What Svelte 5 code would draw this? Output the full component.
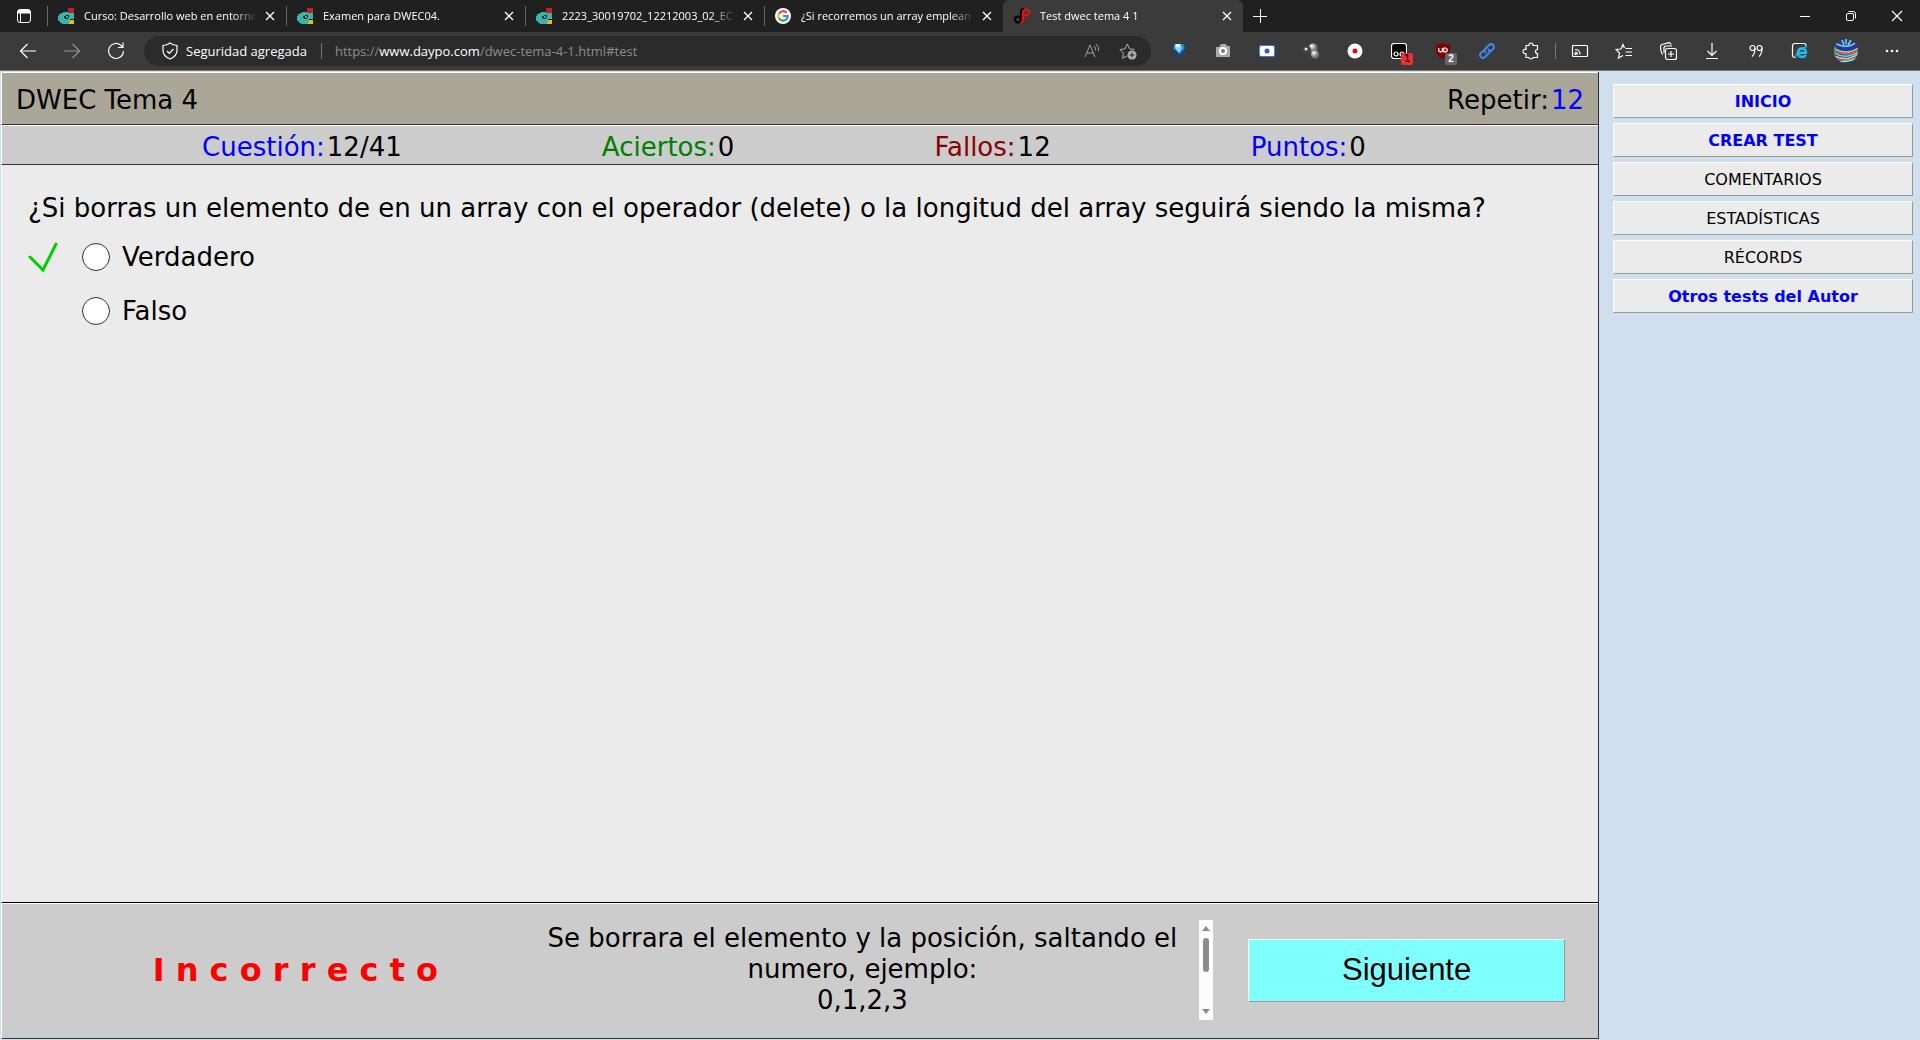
<script>
  const tabs = [
    { title: 'Curso: Desarrollo web en entorno', icon: 'campus' },
    { title: 'Examen para DWEC04.', icon: 'campus' },
    { title: '2223_30019702_12212003_02_EC', icon: 'campus' },
    { title: '¿Si recorremos un array emplean', icon: 'google' },
    { title: 'Test dwec tema 4 1', icon: 'daypo', active: true }
  ];
  const stats = [
    { label: 'Cuestión:', value: '12/41', tone: 'blue' },
    { label: 'Aciertos:', value: '0', tone: 'green' },
    { label: 'Fallos:', value: '12', tone: 'maroon' },
    { label: 'Puntos:', value: '0', tone: 'blue' }
  ];
  const options = [
    { text: 'Verdadero', correct: true },
    { text: 'Falso', correct: false }
  ];
  const links = [
    { text: 'INICIO', strong: true },
    { text: 'CREAR TEST', strong: true },
    { text: 'COMENTARIOS' },
    { text: 'ESTADÍSTICAS' },
    { text: 'RÉCORDS' },
    { text: 'Otros tests del Autor', strong: true }
  ];
  let answer = $state('');
</script>

<div class="window">
  <header class="tabstrip">
    <button class="tabmenu" aria-label="Menú de pestañas">
      <svg width="16" height="16" viewBox="0 0 16 16" fill="none" stroke="#fff"><rect x="1.5" y="1.5" width="13" height="13" rx="2.5" /><path d="M2 3h12M2 4.5h12" stroke-width="2" /><path d="M4.5 5v9" /></svg>
    </button>
    {#each tabs as tab}
      <div class="tab" class:active={tab.active}>
        {#if tab.icon === 'campus'}
          <svg class="fav" viewBox="0 0 16 16"><path d="M10 0h6v6h-6z" fill="#c4201d" /><path d="M11 12h5v4h-5z" fill="#f3b715" /><path d="M5 4h5v1h6v6h-4v3h-1v2H4v-1H2v-2H0V8h1V6h2V5h2z" fill="#35b5ad" /><path d="M6 8h2V7h3v3h-1v1H7v-1H6z" fill="#202020" /><path d="M8 8h2v2H8z" fill="#35b5ad" /></svg>
        {:else if tab.icon === 'google'}
          <svg class="fav" viewBox="0 0 16 16"><circle cx="8" cy="8" r="8" fill="#fff" /><g fill="none" stroke-width="2.2"><path d="M11.5 4.6A4.8 4.8 0 0 0 3.9 5.7" stroke="#ea4335" /><path d="M3.9 5.7a4.8 4.8 0 0 0 0 4.6" stroke="#fbbc05" /><path d="M3.9 10.3a4.8 4.8 0 0 0 7.1 1.4" stroke="#34a853" /><path d="M11 11.7A4.6 4.6 0 0 0 12.7 8H8" stroke="#4285f4" /></g></svg>
        {:else}
          <svg class="fav" viewBox="0 0 16 16" fill="none" stroke-width="2"><circle cx="4" cy="11.5" r="3" stroke="#000" /><path d="M7 12V4q0-3 3-3" stroke="#000" /><path d="M6 15q3 0 3-4V4.500" stroke="#f00b0b" /><circle cx="12" cy="4.500" r="3" stroke="#f00b0b" /></svg>
        {/if}
        <span class="title">{tab.title}</span>
        <button class="close" aria-label="Cerrar pestaña"><svg width="10" height="10" viewBox="0 0 10 10" stroke="#fff" stroke-width="1.300"><path d="M1 1l8 8M9 1L1 9" /></svg></button>
      </div>
    {/each}
    <button class="newtab" aria-label="Nueva pestaña"><svg width="14" height="14" viewBox="0 0 14 14" stroke="#fff"><path d="M7.500 0v14M0 7.500h14" /></svg></button>
    <div class="controls">
      <button aria-label="Minimizar"><svg width="10" height="10" viewBox="0 0 10 10" stroke="#fff"><path d="M0 5.500h10" /></svg></button>
      <button aria-label="Restaurar"><svg width="10" height="10" viewBox="0 0 10 10" stroke="#fff" fill="none"><rect x=".5" y="2.500" width="7" height="7" rx="1.500" /><path d="M2.500 .5H7q2.500 0 2.500 2.500v4.500" /></svg></button>
      <button aria-label="Cerrar"><svg width="12" height="12" viewBox="0 0 12 12" stroke="#fff" stroke-width="1.200"><path d="M1 1l10 10M11 1L1 11" /></svg></button>
    </div>
  </header>

  <nav class="toolbar" aria-label="Navegador">
    <button class="tool" aria-label="Atrás"><svg width="18" height="18" viewBox="0 0 18 18"><path d="M17 9H1.500M8.500 2l-7 7 7 7" /></svg></button>
    <button class="tool dim" aria-label="Adelante"><svg width="18" height="18" viewBox="0 0 18 18"><path d="M1 9h15.500M9.500 2l7 7-7 7" /></svg></button>
    <button class="tool" aria-label="Actualizar"><svg width="18" height="18" viewBox="0 0 18 18"><path d="M16.500 9A7.500 7.500 0 1 1 13.500 3L16 5.500M16 .5v5h-5" /></svg></button>
    <div class="address">
      <svg width="16" height="18" viewBox="0 0 16 18" fill="none" stroke="#fff" stroke-width="1.200"><path d="M8 1Q11 3.300 15 3.500V8.500Q15 14 8 17 1 14 1 8.500V3.500Q5 3.300 8 1z" /><path d="M5 9l2.300 2.300L11.500 7" /></svg>
      <span class="secure">Seguridad agregada</span>
      <i class="bar"></i>
      <a class="url" href="#test">https://<b>www.daypo.com</b>/dwec-tema-4-1.html#test</a>
      <button class="mini" aria-label="Leer en voz alta"><svg width="16" height="16" viewBox="0 0 16 16" fill="none" stroke="#a0a0a0"><path d="M1 14L6 2l5 12M2.700 10h6.600M10 3q2 2 1.500 4.500M12 1q3.500 3 2.500 7" /></svg></button>
      <button class="mini" aria-label="Agregar a favoritos"><svg width="18" height="18" viewBox="0 0 18 18" fill="none" stroke="#b0b0b0"><path d="M8 14l-4.500 2.300 1-5L1 7.500l5-.700L8.300 2l2.300 4.800 5 .700" /><circle cx="13" cy="13" r="4.500" fill="#b0b0b0" stroke="none" /><path d="M10.500 13h5M13 10.500v5" stroke="#222" /></svg></button>
    </div>
    <button class="tool" aria-label="Extensión diamante"><svg width="16" height="16" viewBox="0 0 16 16" class="flat"><path d="M3 1h10l2 4-5 6-1 5H8L6 11 1 5z" fill="#084b83" /><path d="M4 1h8l2 4-5 6-7-6z" fill="#1d8fe0" /><path d="M4 1h5l2 4-3 5-4-5z" fill="#8cd5fb" /><path d="M5 1h4v3H5z" fill="#fff" /></svg></button>
    <button class="tool" aria-label="Captura"><svg width="16" height="16" viewBox="0 0 16 16" class="flat"><path d="M1 4h3l2-3h5l1 2h3v11H1z" fill="#a9a9a9" /><circle cx="8" cy="8" r="4" fill="#fff" /><circle cx="8" cy="8" r="2" fill="#777" /></svg></button>
    <button class="tool" aria-label="Grabador de pantalla"><svg width="16" height="16" viewBox="0 0 16 16"><rect x="0" y="2" width="16" height="12" rx="2" fill="#2a7de1" stroke="none" /><rect x="1.500" y="3.500" width="13" height="9" rx="1" fill="#fff" /><circle cx="8" cy="8" r="2.500" fill="#4651cb" stroke="none" /></svg></button>
    <button class="tool" aria-label="Moléculas"><svg width="16" height="16" viewBox="0 0 16 16" class="flat"><defs><radialGradient id="ball" cx=".35" cy=".3"><stop stop-color="#fff" /><stop offset="1" stop-color="#777" /></radialGradient></defs><circle cx="10" cy="5" r="4.500" fill="url(#ball)" /><circle cx="12" cy="11.500" r="4" fill="url(#ball)" /><circle cx="4" cy="7" r="4" fill="#444" /><circle cx="3" cy="6" r="1.500" fill="#eee" /></svg></button>
    <button class="tool" aria-label="Grabar"><svg width="16" height="16" viewBox="0 0 16 16" class="flat"><circle cx="8" cy="8" r="7.500" fill="#fff" /><circle cx="8" cy="8" r="2.500" fill="#e50a0a" /></svg></button>
    <button class="tool badged" aria-label="Tampermonkey, 1"><svg width="16" height="16" viewBox="0 0 16 16"><rect x=".5" y=".5" width="15" height="15" rx="2.500" fill="#000" /><circle cx="5" cy="11" r="2" /><circle cx="11" cy="11" r="2" /></svg><span class="badge red">1</span></button>
    <button class="tool badged" aria-label="Bloqueador, 2"><svg width="16" height="16" viewBox="0 0 16 16"><path d="M8 0q3 2 7 2v6q0 5-7 8-7-3-7-8V2q4 0 7-2z" fill="#800000" stroke="none" /><path d="M3.800 5v2.500q0 1.300 1.300 1.300h1q1.300 0 1.300-1.300V5M8.800 5v3.800h1.500q1.900 0 1.900-1.900T10.300 5z" /></svg><span class="badge gray">2</span></button>
    <button class="tool" aria-label="Enlaces"><svg class="link" width="18" height="18" viewBox="0 0 18 18"><path d="M7.500 10.500q-2-2 0-4L11 3q2-1.800 4 0t0 4l-2.500 2.500M10.500 7.500q2 2 0 4L7 15q-2 1.800-4 0t0-4l2.500-2.500" /></svg></button>
    <button class="tool" aria-label="Extensiones"><svg width="18" height="18" viewBox="0 0 18 18"><path d="M4 3.500h3Q7 1 9 1t2 2.500h4.500v4Q13.500 7.500 13.500 9.500t2 2v4H11Q11 17 9 17t-2-1.500H4v-4Q1 12 1 9.500t3-2z" stroke-linejoin="round" /></svg></button>
    <i class="bar edge"></i>
    <button class="tool" aria-label="Transmitir"><svg width="18" height="14" viewBox="0 0 18 14"><rect x="1.500" y="1.500" width="15" height="11" rx="1" /><path d="M4 5.500q5 0 5 5M4 8q2.500 0 2.500 2.500" /><circle cx="4.500" cy="10" r=".7" /></svg></button>
    <button class="tool" aria-label="Favoritos"><svg width="18" height="18" viewBox="0 0 18 18"><path d="M9.500 6L8 2.500 6 7 1 7.500 4.500 11l-1 5L8 13.500M10.500 6.500H17M10.500 10H17M10.500 13.500H17" /></svg></button>
    <button class="tool" aria-label="Colecciones"><svg width="18" height="18" viewBox="0 0 18 18"><path d="M4 12.500Q2 12 1.500 5 1.300 3 3 2.500l7-1.800q1.800 0 2 2M5 11V6q0-2 2-2h6" /><rect x="6.500" y="6.500" width="11" height="11" rx="2" /><path d="M12 9v6M9 12h6" /></svg></button>
    <button class="tool" aria-label="Descargas"><svg width="14" height="18" viewBox="0 0 14 18"><path d="M7 1v12M2.500 9L7 13.500 11.500 9M1 16.500h12" /></svg></button>
    <button class="tool" aria-label="Citar"><svg width="14" height="14" viewBox="0 0 14 14"><circle cx="3.500" cy="4" r="2.500" /><path d="M6 4q0 6-3 8.500" /><circle cx="10.500" cy="4" r="2.500" /><path d="M13 4q0 6-3 8.500" /></svg></button>
    <button class="tool" aria-label="Modo Internet Explorer"><svg width="18" height="18" viewBox="0 0 18 18"><path d="M4 15.500Q1.500 15.500 1.500 13V4Q1.500 1.500 4 1.500h9.500Q15 1.500 15 4" /><path d="M15 13Q13.500 15 11 15q-4-.2-4-4.500T11 6.500q4 .2 4 4.200H7.500" stroke="#1ebbee" stroke-width="2.500" /><path d="M5 16q-1-4 4-8t7-3" stroke="#1ebbee" /></svg></button>
    <button class="tool avatar" aria-label="Perfil"><svg width="24" height="24" viewBox="0 0 24 24"><defs><clipPath id="face"><circle cx="12" cy="12" r="12" /></clipPath></defs><g clip-path="url(#face)" stroke-width="1.500"><path d="M0 0h24v24H0z" fill="#23408f" stroke="none" /><path d="M0 3q12 9 24-1" stroke="#8fd2ec" /><path d="M0 6q12 9 24 0" stroke="#1b33c9" /><path d="M0 9q12 8 24 0" stroke="#d9c66a" /><path d="M0 11q12 8 24 0" stroke="#d05a7e" /><path d="M0 14q12 7 24-1" stroke="#62d9d8" /><path d="M0 17q12 6 24-2" stroke="#e6da5c" /><path d="M2 20q11 3 22-2" stroke="#d1549a" /><path d="M4 23q9 0 18-3M12 0v5M8 1l2 5M17 1l-3 5" stroke="#7ee6c0" /><path d="M1 7v9" stroke="#22b84a" /></g></svg></button>
    <button class="tool" aria-label="Más"><svg width="14" height="4" viewBox="0 0 14 4" class="flat" fill="#fff"><circle cx="2" cy="2" r="1.300" /><circle cx="7" cy="2" r="1.300" /><circle cx="12" cy="2" r="1.300" /></svg></button>
  </nav>

  <div class="page">
    <main>
      <div class="head"><h1>DWEC Tema 4</h1><span class="pair">Repetir:<b class="blue">12</b></span></div>
      <div class="stats">
        {#each stats as s}
          <span class="pair"><span class={s.tone}>{s.label}</span><span>{s.value}</span></span>
        {/each}
      </div>
      <section class="question">
        <p>¿Si borras un elemento de en un array con el operador (delete) o la longitud del array seguirá siendo la misma?</p>
        {#each options as o}
          <div class="option">
            <span class="mark">
              {#if o.correct}
                <svg width="30" height="32" viewBox="0 0 30 32" fill="none" stroke="#00d000" stroke-width="3" stroke-linecap="round"><path d="M2 16L15 29 28 3" /></svg>
              {/if}
            </span>
            <label><input type="radio" name="answer" value={o.text} bind:group={answer} />{o.text}</label>
          </div>
        {/each}
      </section>
      <footer>
        <strong class="verdict">I n c o r r e c t o</strong>
        <div class="note">
          <p>Se borrara el elemento y la posición, saltando el numero, ejemplo:<br />0,1,2,3</p>
          <div class="scroll">
            <svg width="8" height="5" viewBox="0 0 8 5"><path d="M4 0l4 5H0z" fill="#8b8b8b" /></svg>
            <i class="thumb"></i>
            <svg width="8" height="5" viewBox="0 0 8 5"><path d="M4 5l4-5H0z" fill="#8b8b8b" /></svg>
          </div>
        </div>
        <button class="next">Siguiente</button>
      </footer>
    </main>
    <aside>
      {#each links as l}
        <a href="#test" class:strong={l.strong}>{l.text}</a>
      {/each}
    </aside>
  </div>
</div>

<style>
  :global(body) { background: #d0dfee; }
  * { box-sizing: border-box; }
  button { border: 0; padding: 0; margin: 0; background: none; color: inherit; font: inherit; display: flex; align-items: center; justify-content: center; }
  svg { display: block; flex: none; }
  .window { min-height: 100vh; display: flex; flex-direction: column; font-family: Verdana, "DejaVu Sans", sans-serif; }

  .tabstrip { display: flex; height: 32px; background: #202020; color: #fff; font: 11px/16px "Open Sans", sans-serif; }
  .tabmenu { width: 47px; }
  .tab { flex: 0 1 239px; min-width: 0; display: flex; align-items: center; padding: 0 11px; position: relative; }
  .tab::before { content: ""; position: absolute; left: 0; top: 6px; height: 20px; width: 1px; background: #666; }
  .tab.active { flex-basis: 240px; background: #3b3b3b; border-radius: 6px 6px 0 0; }
  .tab.active::before { display: none; }
  .fav { width: 16px; height: 16px; margin-right: 10px; }
  .title { flex: 1; min-width: 0; overflow: hidden; white-space: nowrap; mask-image: linear-gradient(to right, #000 calc(100% - 24px), transparent); }
  .close { width: 10px; height: 16px; margin-left: 8px; }
  .newtab { width: 34px; }
  .controls { display: flex; margin-left: auto; }
  .controls button { width: 46px; }

  .toolbar { display: flex; align-items: center; height: 39px; padding: 0 6px; background: #3b3b3b; border-bottom: 1px solid #767676; }
  .tool { flex: none; width: 44px; height: 32px; }
  .tool svg:not(.flat) { fill: none; stroke: #fff; stroke-width: 1.2; }
  .tool svg.flat { stroke: none; }
  .tool svg.link { stroke: #4285f4; stroke-width: 2; stroke-linecap: round; }
  .dim { opacity: 0.45; }
  .avatar { width: 48px; }
  .badged { position: relative; }
  .badge { position: absolute; left: 24px; top: 18px; width: 12px; height: 12px; border-radius: 2px; font: bold 10px/12px "Liberation Sans", sans-serif; text-align: center; }
  .red { background: #f03030; color: #200; }
  .gray { background: #666; color: #fff; }
  .bar { flex: none; width: 1px; height: 16px; background: #767676; }
  .edge { margin: 0 2px; }
  .address { flex: 1; min-width: 0; display: flex; align-items: center; height: 30px; margin: 0 6px; padding: 0 5px 0 18px; border-radius: 15px; background: #2b2b2b; color: #fff; font: 13px/18px "Open Sans", sans-serif; }
  .secure { margin: 0 14px 0 8px; white-space: nowrap; }
  .url { flex: 1; min-width: 0; margin-left: 13px; overflow: hidden; white-space: nowrap; color: #8d8d8d; text-decoration: none; }
  .url b { font-weight: 400; color: #fff; }
  .mini { flex: none; width: 36px; height: 24px; }

  .page { flex: 1; display: grid; grid-template-columns: 5fr 1fr; background: #d0dfee; }
  main { display: flex; flex-direction: column; margin: 1px 1px 1px 1px; border-right: 1px solid #333; font-size: 26px; line-height: 31px; color: #000; }
  .head, .stats, .question, footer { border: 1px solid #fff; border-right: 0; border-bottom-color: #333; }
  .head { display: flex; justify-content: space-between; align-items: center; height: 53px; padding: 3px 14px 0; background: #aba798; }
  h1 { margin: 0; font: inherit; }
  .pair { display: flex; gap: 2px; }
  .pair b { font-weight: 400; }
  .blue { color: #00f; }
  .green { color: #008000; }
  .maroon { color: #8b0000; }
  .stats { display: flex; justify-content: space-evenly; align-items: center; height: 40px; padding: 4px 32px 0 0; background: #ccc; }
  .question { flex: 1; padding: 25px 26px; background: #ebebeb; border-top: 0; border-bottom-color: #000; }
  .question p { margin: 3px 0 6px; }
  .option { display: flex; align-items: center; height: 54px; }
  .mark { width: 54px; }
  label { display: flex; align-items: center; gap: 12px; }
  input { appearance: none; width: 28px; height: 28px; margin: 0; border: 1px solid #333; border-radius: 50%; background: #fff; }
  input:checked { box-shadow: inset 0 0 0 6px #fff; background: #06c; }
  footer { display: grid; grid-template-columns: 489fr 688fr 317fr; column-gap: 35px; align-items: center; height: 136px; padding: 0 33px 2px 0; background: #ccc; }
  .verdict { padding-left: 98px; text-align: center; color: #f00; font-size: 32px; line-height: 40px; }
  .note { display: flex; height: 100px; overflow: hidden; }
  .note p { flex: 1; margin: 3px 0 0; text-align: center; }
  .scroll { flex: none; display: flex; flex-direction: column; align-items: center; width: 14px; padding: 6px 0; background: #fcfcfc; }
  .thumb { width: 6px; height: 34px; margin: 7px 0 auto; border-radius: 3px; background: #8b8b8b; }
  .next { height: 63px; border: 1px solid #fff; border-right-color: #999; border-bottom-color: #999; background: #80ffff; color: #000; font: 31px/36px "Liberation Sans", sans-serif; }

  aside { display: flex; flex-direction: column; gap: 5px; padding: 13px 7px 0 13px; }
  aside a { display: block; height: 34px; border: 1px solid #fff; border-right-color: #999; border-bottom-color: #999; background: #ebebeb; color: #000; font-size: 16px; line-height: 33px; text-align: center; text-decoration: none; }
  aside a.strong { color: #00f; font-weight: bold; }
</style>
